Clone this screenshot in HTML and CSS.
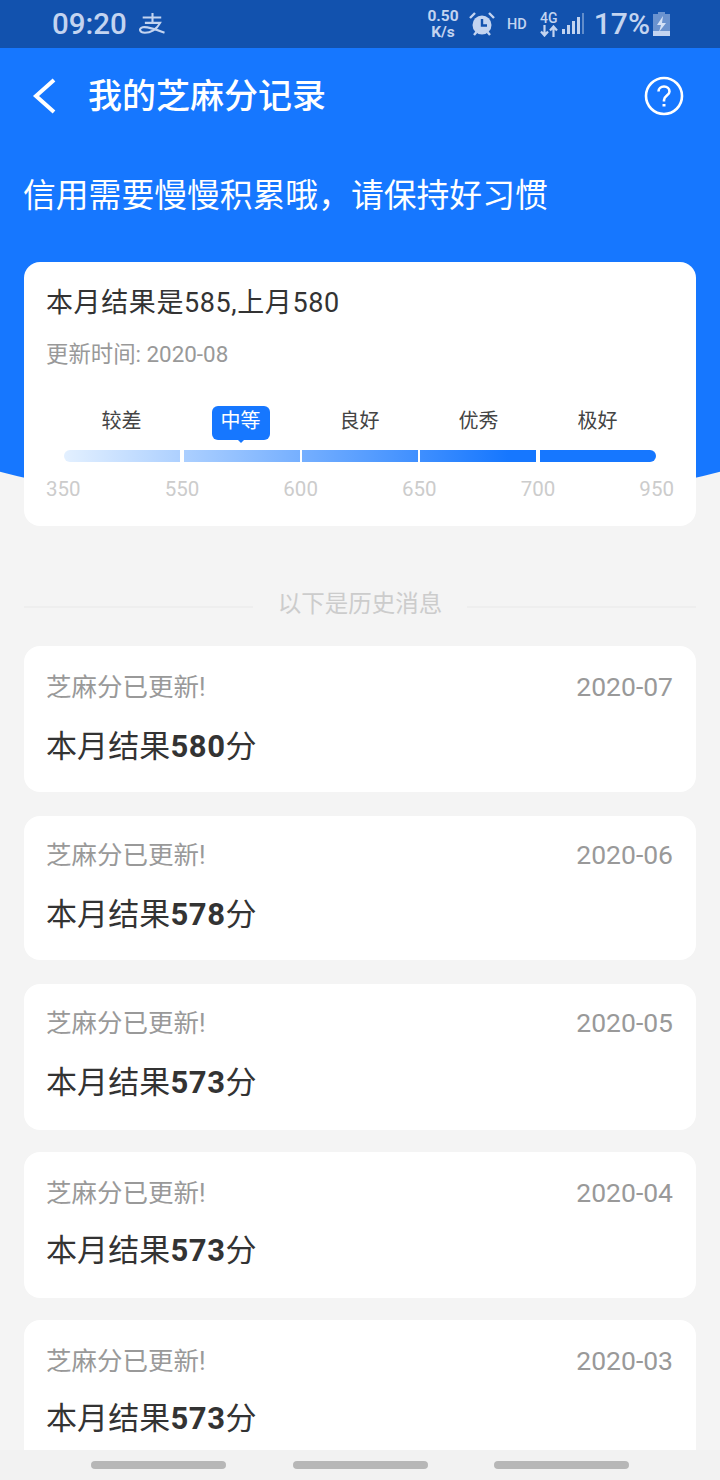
FILE: index.html
```html
<!DOCTYPE html>
<html lang="zh-CN">
<head>
<meta charset="utf-8">
<title>我的芝麻分记录</title>
<link rel="stylesheet" href="styles.css">
</head>
<body>
<div class="page">
  <div class="status">
    <span class="time">09:20</span>
    <svg class="alipay" width="31" height="24" viewBox="0 0 28 22" fill="none" stroke="currentColor" stroke-width="1.900"><path d="M5 5h17M14 1v9M7 10h14c-3 6-9 9-14 9-5 0-6-4-2-5 5-1 12 2 20 5"/></svg>
    <span class="status-right">
      <span class="speed">0.50<br>K/s</span>
      <svg class="alarm" width="26" height="26" viewBox="0 0 26 26"><circle cx="13" cy="14" r="9.500" fill="currentColor"/><path d="M13 8v6.500h5" fill="none" stroke="#1252ae" stroke-width="2.400"/><path d="M1 7l5-5M25 7l-5-5M5 24l2.500-3M21 24l-2.500-3" stroke="currentColor" stroke-width="2.400"/></svg>
      <span class="hd">HD</span>
      <span class="net">4G<svg width="18" height="12" viewBox="0 0 18 12" fill="none" stroke="currentColor" stroke-width="2.200"><path d="M4.500 0v10M1 6.500L4.500 10.500 8 6.500M13.500 12V2M10 5.500L13.500 1.500 17 5.500"/></svg></span>
      <svg class="signal" width="22" height="22" viewBox="0 0 22 22" fill="currentColor"><rect x="0" y="16" width="3" height="5"/><rect x="5" y="12" width="3" height="9"/><rect x="10" y="8" width="3" height="13"/><rect x="15" y="4" width="3" height="17"/><rect x="20" y="0" width="2" height="21" opacity=".45"/></svg>
      <span class="pct">17%</span>
      <svg class="battery" width="17" height="24" viewBox="0 0 17 24"><path d="M5 0h7v2h5v22H0V2h5z" fill="currentColor" opacity=".5"/><path d="M0 19h17v5H0z" fill="currentColor"/><path d="M10 4L4 13h4l-2 7 7-9H9z" fill="#d5e2f6"/></svg>
    </span>
  </div>
  <div class="hero">
    <div class="nav">
      <svg class="back" width="26" height="36" viewBox="0 0 26 36" fill="none" stroke="#fff" stroke-width="4"><path d="M23 2L5 18l18 16"/></svg>
      <h1 class="nav-title">我的芝麻分记录</h1>
      <svg class="help" width="40" height="40" viewBox="0 0 40 40" fill="none" stroke="#fff" stroke-width="2.600"><circle cx="20" cy="20" r="18"/><path d="M14.500 15.500c0-3 2.400-5 5.500-5s5.500 2 5.500 5c0 4-5.500 4-5.500 8.500v1.500"/><path d="M20 28v2.500" stroke-width="3"/></svg>
    </div>
    <p class="slogan">信用需要慢慢积累哦，请保持好习惯</p>
  </div>
  <section class="summary">
    <p class="summary-title">本月结果是585,上月580</p>
    <p class="summary-date">更新时间: 2020-08</p>
    <div class="levels">
      <span class="level">较差</span>
      <span class="level active">中等</span>
      <span class="level">良好</span>
      <span class="level">优秀</span>
      <span class="level">极好</span>
    </div>
    <div class="bar"><i class="wide"></i><i></i><i></i><i class="wide"></i></div>
    <div class="scale"><span>350</span><span>550</span><span>600</span><span>650</span><span>700</span><span>950</span></div>
  </section>
  <div class="divider"><span>以下是历史消息</span></div>
  <div class="list">
    <article class="item"><div class="item-top"><span>芝麻分已更新!</span><time>2020-07</time></div><p class="item-value">本月结果<b>580</b>分</p></article>
    <article class="item"><div class="item-top"><span>芝麻分已更新!</span><time>2020-06</time></div><p class="item-value">本月结果<b>578</b>分</p></article>
    <article class="item"><div class="item-top"><span>芝麻分已更新!</span><time>2020-05</time></div><p class="item-value">本月结果<b>573</b>分</p></article>
    <article class="item"><div class="item-top"><span>芝麻分已更新!</span><time>2020-04</time></div><p class="item-value">本月结果<b>573</b>分</p></article>
    <article class="item"><div class="item-top"><span>芝麻分已更新!</span><time>2020-03</time></div><p class="item-value">本月结果<b>573</b>分</p></article>
  </div>
  <div class="softkeys"><i></i><i></i><i></i></div>
</div>
</body>
</html>
```
FILE: styles.css
```css
* { box-sizing: border-box; }
html, body { margin: 0; padding: 0; }
body { font-family: Roboto, "Noto Sans CJK SC", sans-serif; background: #f4f4f4; color: #333; }
p, h1 { margin: 0; font-weight: 400; }
.page { position: relative; width: 720px; height: 1480px; overflow: hidden; background: #f4f4f4; }

.status { height: 48px; background: #1252ae; color: #c3d4f0; display: flex; align-items: center; padding: 0 50px 0 52px; }
.time { font-size: 29.500px; font-weight: 500; line-height: 48px; }
.alipay { margin-left: 10px; }
.status-right { margin-left: auto; display: flex; align-items: center; }
.speed { font-size: 15.500px; font-weight: 700; line-height: 16px; text-align: center; width: 32px; }
.alarm { margin-left: 10px; }
.hd { font-size: 14.500px; font-weight: 500; margin-left: 12px; }
.net { font-size: 14px; font-weight: 500; line-height: 13px; margin-left: 13px; width: 18px; display: flex; flex-direction: column; align-items: center; }
.signal { margin-left: 4px; }
.pct { font-size: 30px; font-weight: 500; margin-left: 10px; line-height: 48px; }
.battery { margin-left: 3px; }

.hero { height: 467px; background: #1677ff; color: #fff; clip-path: ellipse(700px 304px at 50% 163px); }
.nav { height: 96px; display: flex; align-items: center; padding: 0 36px 0 31px; }
.back { flex: none; }
.nav-title { font-size: 34px; font-weight: 500; margin-left: 31px; line-height: 96px; }
.help { margin-left: auto; }
.slogan { font-size: 32.800px; line-height: 48px; margin: 28px 0 0 23px; }

.summary { position: relative; margin: -253px 24px 0; height: 264px; background: #fff; border-radius: 16px; padding: 0 22px; }
.summary-title { font-size: 27px; letter-spacing: .6px; line-height: 38px; padding-top: 22px; height: 59px; }
.summary-date { font-size: 22.400px; line-height: 32px; color: #999; margin-top: 17px; }
.levels { display: grid; grid-template-columns: repeat(5, 119px); margin: 36px 0 0 16px; height: 34px; }
.level { font-size: 20px; line-height: 30px; text-align: center; color: #444; justify-self: center; width: 58px; border-radius: 6px; position: relative; white-space: nowrap; }
.level.active { background: #1677ff; color: #fff; }
.level.active::after { content: ""; position: absolute; left: 50%; top: 100%; margin-left: -3px; border: 3px solid transparent; border-top-color: #1677ff; border-bottom: 0; }
.bar { margin: 10px 0 0 18px; width: 592px; height: 12px; display: flex; gap: 116px; padding-left: 116px; border-radius: 6px; overflow: hidden; background: linear-gradient(90deg, #e3f0ff 0%, #1677ff 75%); }
.bar i { flex: none; width: 2px; background: #fff; }
.bar i.wide { width: 4px; }
.scale { display: flex; justify-content: space-between; margin: 15px 0 0; font-size: 20.500px; line-height: 24px; color: #ccc; }

.divider { display: flex; align-items: center; gap: 25px; margin: 60px 24px 0; font-size: 23.500px; line-height: 36px; color: #ccc; height: 36px; }
.divider::before, .divider::after { content: ""; flex: 1; height: 2px; background: #eee; margin-top: 5px; }

.list { margin: 24px 24px 0; display: flex; flex-direction: column; gap: 22px; }
.item { flex: none; height: 146px; background: #fff; border-radius: 16px; padding: 23px 23px 0 22px; }
.item:nth-child(1) { margin-bottom: 2px; }
.item:nth-child(2) { height: 144px; margin-bottom: 2px; padding-top: 21px; }
.item:nth-child(3) { padding-top: 21px; }
.item-top { display: flex; justify-content: space-between; font-size: 25.500px; line-height: 36px; color: #999; }
.item-top time { font-size: 26.500px; }
.item-value { font-size: 31px; letter-spacing: .1px; line-height: 44px; margin-top: 20px; color: #333; }
.item:nth-child(n+4) .item-value { margin-top: 18px; }
.item-value b { font-weight: 700; letter-spacing: .6px; }

.softkeys { position: absolute; left: 0; right: 0; bottom: 0; height: 30px; background: #f2f2f2; display: flex; justify-content: space-between; padding: 11px 91px 0; }
.softkeys i { width: 135px; height: 8px; border-radius: 4px; background: #b7b7b7; }
```
